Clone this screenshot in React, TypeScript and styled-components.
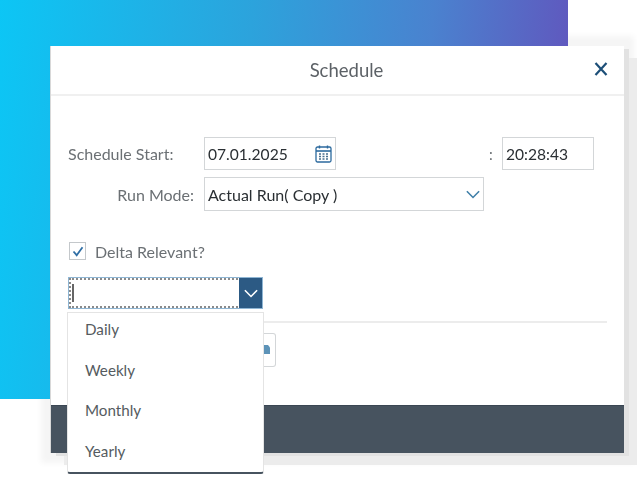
import styled, { createGlobalStyle } from "styled-components";

const GlobalStyle = createGlobalStyle`
  html, body {
    margin: 0;
    padding: 0;
    background: #fff;
  }
  body {
    font-family: "Lato", "Noto Sans", sans-serif;
  }
`;

const Stage = styled.div`
  position: relative;
  width: 637px;
  height: 489px;
  overflow: hidden;
  padding: 46px 13px 0 51px;
  box-sizing: border-box;
  filter: blur(0.35px);
`;

const DialogShadow = styled.div`
  position: absolute;
  left: 51px;
  top: 46px;
  width: 573px;
  height: 407px;
  box-shadow: 5px 3px 0 0 #e2e2e2, 13px 12px 0 0 #ececec, 0 0 6px 10px #f5f5f5;
`;

const Backdrop = styled.div`
  position: absolute;
  top: 0;
  left: 0;
  width: 568px;
  height: 399px;
  background: linear-gradient(95deg, #0cc6f5 0%, #2ca3dc 42%, #4a82cf 72%, #6450bb 100%);
`;

const Dialog = styled.div`
  position: relative;
  height: 407px;
  display: flex;
  flex-direction: column;
  background: #fff;
  box-shadow: -1px 0 0 #d8d8d8;
`;

const Header = styled.header`
  height: 50px;
  flex: none;
  display: flex;
  align-items: center;
  justify-content: center;
  position: relative;
  border-bottom: 2px solid #f0f0f0;
  box-sizing: border-box;
`;

const Title = styled.h2`
  margin: 0;
  font-size: 18.5px;
  font-weight: 400;
  color: #5c6166;
  padding-left: 18px;
`;

const CloseButton = styled.button`
  position: absolute;
  right: 16px;
  top: 15px;
  width: 14px;
  height: 16px;
  padding: 0;
  border: 0;
  background: none;
  display: flex;
`;

const Body = styled.div`
  flex: 1;
  padding: 41px 17px 0;
  display: flex;
  flex-direction: column;
`;

const Row = styled.div<{ $top?: number }>`
  display: flex;
  align-items: center;
  margin-top: ${(p) => p.$top ?? 0}px;
`;

const FieldLabel = styled.label<{ $align: "left" | "right" }>`
  width: 136px;
  padding-right: 10px;
  box-sizing: border-box;
  text-align: ${(p) => p.$align};
  font-size: 16px;
  color: #6b7074;
  white-space: nowrap;
`;

const InputBox = styled.div<{ $width: number; $height: number; $size: number }>`
  width: ${(p) => p.$width}px;
  height: ${(p) => p.$height}px;
  box-sizing: border-box;
  border: 1.5px solid #d3d6d8;
  display: flex;
  align-items: center;
  justify-content: space-between;
  padding: 0 3px 0 3px;
  font-size: ${(p) => p.$size}px;
  color: #2a2f33;
  background: #fff;
`;

const Colon = styled.span`
  margin-left: 153px;
  width: 13px;
  font-size: 15px;
  color: #6b7074;
`;

const CheckRow = styled.div`
  display: flex;
  align-items: center;
  gap: 9px;
  margin: 31px 0 0 1px;
  height: 18px;
  font-size: 16px;
  color: #6b7074;
`;

const CheckBox = styled.span`
  width: 17px;
  height: 18px;
  box-sizing: border-box;
  border: 1.5px solid #c4c8cb;
  display: flex;
  align-items: center;
  justify-content: center;
`;

const ComboBox = styled.div`
  margin-top: 17px;
  width: 195px;
  height: 32px;
  box-sizing: border-box;
  border: 1px solid #8fb6d4;
  outline: 2px dotted #8a8a8a;
  outline-offset: -3px;
  display: flex;
  justify-content: flex-end;
  position: relative;
`;

const Caret = styled.span`
  position: absolute;
  left: 3px;
  top: 6px;
  width: 2px;
  height: 18px;
  background: #666;
`;

const ComboToggle = styled.span`
  position: relative;
  width: 23px;
  background: #2c5a84;
  display: flex;
  align-items: center;
  justify-content: center;
`;

const Rule = styled.div`
  margin-top: 12px;
  width: 539px;
  height: 2px;
  background: #ececec;
`;

const ActionIcon = styled.div`
  position: absolute;
  left: 208px;
  top: 287px;
  width: 17px;
  height: 34px;
  box-sizing: border-box;
  border: 1.5px solid #d3d6d8;
  border-left: 0;
  border-radius: 0 3px 3px 0;
  display: flex;
  align-items: center;
  justify-content: center;
`;

const Footer = styled.footer`
  height: 48px;
  flex: none;
  background: #47535f;
  border-top: 1px solid #3a4653;
  box-sizing: border-box;
`;

const Menu = styled.ul`
  position: absolute;
  left: 16px;
  top: 266px;
  width: 197px;
  height: 162px;
  margin: 0;
  padding: 0;
  box-sizing: border-box;
  list-style: none;
  background: #fff;
  border: 1px solid #e4e4e4;
  border-bottom: 2px solid #47535f;
  border-radius: 0 0 3px 3px;
  z-index: 2;
`;

const MenuItem = styled.li`
  height: 40.5px;
  padding-left: 17px;
  display: flex;
  align-items: center;
  font-size: 15.2px;
  color: #555b60;

  &:first-child {
    margin-top: -4px;
  }
`;

const options = ["Daily", "Weekly", "Monthly", "Yearly"];

const CalendarIcon = () => (
  <svg width="17" height="20" viewBox="0 0 17 20" fill="none">
    <rect x="1" y="3" width="15" height="15" rx="1.5" stroke="#2c6a9e" strokeWidth="1.3" />
    <path d="M1 7h15" stroke="#2c6a9e" strokeWidth="1.6" />
    <path d="M4.5 1.5v3M12.5 1.5v3" stroke="#2c6a9e" strokeWidth="1.4" />
    <path
      d="M4 10h2M7.5 10h2M11 10h2M4 12.5h2M7.5 12.5h2M11 12.5h2M4 15h2M7.5 15h2M11 15h2"
      stroke="#4a6f8f"
      strokeWidth="1.4"
    />
  </svg>
);

const Chevron = ({ color }: { color: string }) => (
  <svg width="14" height="9" viewBox="0 0 16 10" fill="none">
    <path d="M1 1.2 8 8.4l7-7.2" stroke={color} strokeWidth="1.8" />
  </svg>
);

export default function App() {
  return (
    <Stage>
      <GlobalStyle />
      <DialogShadow />
      <Backdrop />
      <Dialog>
        <Header>
          <Title>Schedule</Title>
          <CloseButton aria-label="Close">
            <svg width="14" height="16" viewBox="0 0 14 16" fill="none">
              <path d="M1.5 2 12.5 14M12.5 2 1.5 14" stroke="#1d4f78" strokeWidth="2.2" />
            </svg>
          </CloseButton>
        </Header>
        <Body>
          <Row>
            <FieldLabel $align="left">Schedule Start:</FieldLabel>
            <InputBox $width={132} $height={33} $size={15.6}>
              07.01.2025
              <CalendarIcon />
            </InputBox>
            <Colon>:</Colon>
            <InputBox $width={92} $height={33} $size={15.6}>
              20:28:43
            </InputBox>
          </Row>
          <Row $top={7}>
            <FieldLabel $align="right">Run Mode:</FieldLabel>
            <InputBox $width={280} $height={34} $size={16}>
              Actual Run( Copy )
              <Chevron color="#3f7fa8" />
            </InputBox>
          </Row>
          <CheckRow>
            <CheckBox>
              <svg width="12" height="11" viewBox="0 0 12 11" fill="none">
                <path d="M1.5 5.5 4.7 9.2 10.5 1.2" stroke="#2f6ea5" strokeWidth="1.8" />
              </svg>
            </CheckBox>
            Delta Relevant?
          </CheckRow>
          <ComboBox>
            <Caret />
            <ComboToggle>
              <Chevron color="#fff" />
            </ComboToggle>
          </ComboBox>
          <Rule />
        </Body>
        <ActionIcon>
          <svg width="8" height="12" viewBox="0 0 8 12" fill="none">
            <path d="M0 1h5l2 2.5V10H0z" fill="#5d93b8" />
          </svg>
        </ActionIcon>
        <Menu>
          {options.map((o) => (
            <MenuItem key={o}>{o}</MenuItem>
          ))}
        </Menu>
        <Footer />
      </Dialog>
    </Stage>
  );
}
